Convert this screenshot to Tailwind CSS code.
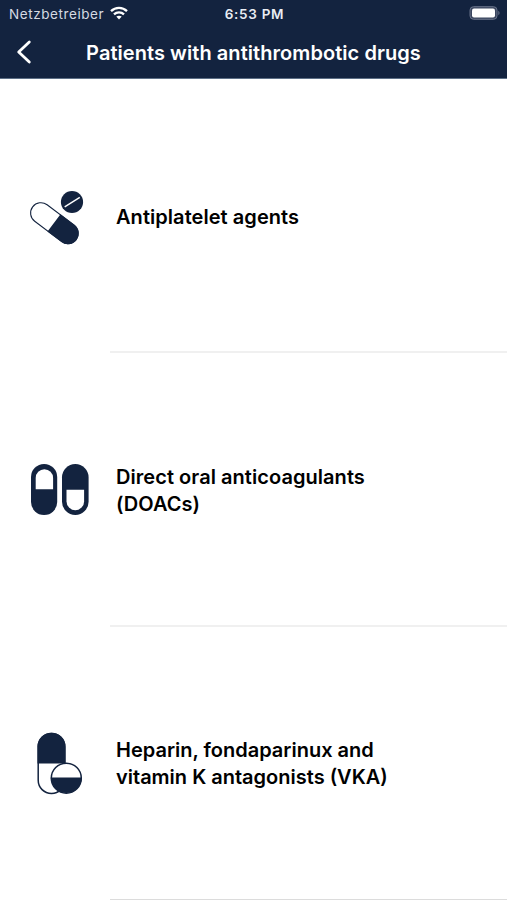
<!DOCTYPE html>
<html lang="en">
<head>
  <meta charset="UTF-8" />
  <meta name="viewport" content="width=device-width, initial-scale=1.0"/>
  <title>Patients with antithrombotic drugs</title>
  <script src="https://cdn.jsdelivr.net/npm/@tailwindcss/browser@4"></script>
</head>
<body class="h-[900px] overflow-hidden bg-white font-['Inter',sans-serif] text-black">

  <header class="h-[79px] bg-[#13233f] text-white border-b border-[#5d6f86]">
    <!-- Status bar -->
    <div class="grid grid-cols-3 items-center h-7 pl-[9px] pr-[7px] text-[13.5px]">
      <div class="flex items-center gap-[6px] text-[#d5dae2]">
        <span id="carrier" class="tracking-[0.58px] whitespace-nowrap">Netzbetreiber</span>
        <svg class="w-[18px] h-[14px] -mt-[2px]" viewBox="0 0 18 14" fill="none" stroke="#fff" stroke-width="2.3">
          <path d="M1 5.1C5.5 .7 12.500 .7 17 5.100"/>
          <path d="M4 8.300C6.800 5.600 11.200 5.600 14 8.300"/>
          <path d="M9 13.400L6.300 10.600C7.800 9.300 10.200 9.300 11.700 10.600Z" fill="#fff" stroke="none"/>
        </svg>
      </div>
      <div class="text-center font-semibold tracking-[0.7px] text-[#e9edf3]"><span id="time">6:53 PM</span></div>
      <svg class="w-[31px] h-[14px] justify-self-end -mt-[2px]" viewBox="0 0 31 14">
        <rect x="1" y=".7" width="27" height="12.600" rx="3.500" fill="#3b465f" stroke="#69738a"/>
        <rect x="3" y="2.600" width="23" height="8.800" rx="2" fill="#fff"/>
        <path d="M29.300 4.800C31 5.500 31 8.500 29.300 9.200Z" fill="#69738a"/>
      </svg>
    </div>
    <!-- Title bar -->
    <div class="flex items-center h-12">
      <button class="w-12 pl-4" aria-label="Back">
        <svg class="w-4 h-6" viewBox="0 0 16 24" fill="none" stroke="#fff" stroke-width="2.800" stroke-linecap="round" stroke-linejoin="round">
          <path d="M13.300 2L2.700 12L13.300 22"/>
        </svg>
      </button>
      <h1 class="flex-1 pr-12 pt-px text-center text-[20px] font-semibold tracking-[0.06px] whitespace-nowrap"><span id="title">Patients with antithrombotic drugs</span></h1>
    </div>
  </header>

  <ul>
    <li class="flex h-[274px]">
      <div class="flex items-center w-[110px] pl-[25px]">
        <svg class="w-[70px] h-[70px]" viewBox="25 181 70 70">
          <g transform="translate(54.400 223.200) rotate(37)">
            <rect x="-27.200" y="-10.300" width="54.400" height="20.600" rx="10.300" fill="#fff" stroke="#13233f" stroke-width="1.100"/>
            <path d="M-.5 -10.800H17A10.800 10.800 0 0 1 17 10.800H-.5Z" fill="#13233f"/>
          </g>
          <circle cx="72" cy="202" r="11.100" fill="#13233f"/>
          <path d="M64.700 206.800L79.800 197.300" stroke="#fff" stroke-width="1.400"/>
        </svg>
      </div>
      <div class="flex flex-1 items-center pl-[6px] pt-[4px] border-b-2 border-[#f0f0f0]">
        <p class="text-[20px] leading-[27px] font-semibold tracking-[0.05px]"><span id="row1">Antiplatelet agents</span></p>
      </div>
    </li>

    <li class="flex h-[274px]">
      <div class="flex items-center w-[110px] pl-[25px]">
        <svg class="w-[70px] h-[70px]" viewBox="25 455 70 70">
          <rect x="31" y="464" width="26.200" height="51" rx="13.100" fill="#13233f"/>
          <path d="M35.700 489.300V478A8.700 8.700 0 0 1 53.100 478V489.300Z" fill="#fff"/>
          <rect x="62" y="464" width="26.600" height="51" rx="13.300" fill="#13233f"/>
          <path d="M66.500 489.700V501.400A8.800 8.800 0 0 0 84.100 501.400V489.700Z" fill="#fff"/>
        </svg>
      </div>
      <div class="flex flex-1 items-center pl-[6px] pt-[4px] border-b-2 border-[#f0f0f0]">
        <p class="text-[20px] leading-[27px] font-semibold tracking-[0.05px]"><span id="row2">Direct oral anticoagulants</span><br>(DOACs)</p>
      </div>
    </li>

    <li class="flex h-[273px]">
      <div class="flex items-center w-[110px] pl-[25px]">
        <svg class="w-[70px] h-[70px]" viewBox="25 728.500 70 70">
          <rect x="38.200" y="733" width="26.600" height="60" rx="13.300" fill="#fff" stroke="#13233f" stroke-width="1.500"/>
          <path d="M37.500 763V746A14 13.700 0 0 1 65.500 746V763Z" fill="#13233f"/>
          <circle cx="66.300" cy="777.700" r="15" fill="#fff" stroke="#13233f" stroke-width="1.500"/>
          <path d="M50.800 777A15.500 15.500 0 1 0 81.800 777Z" fill="#13233f"/>
        </svg>
      </div>
      <div class="flex flex-1 items-center pl-[6px] pt-[2px] border-b border-[#dcdcdc]">
        <p class="text-[20px] leading-[27px] font-semibold"><span id="row3">Heparin, fondaparinux and</span><br>vitamin K antagonists (VKA)</p>
      </div>
    </li>
  </ul>

</body>
</html>
